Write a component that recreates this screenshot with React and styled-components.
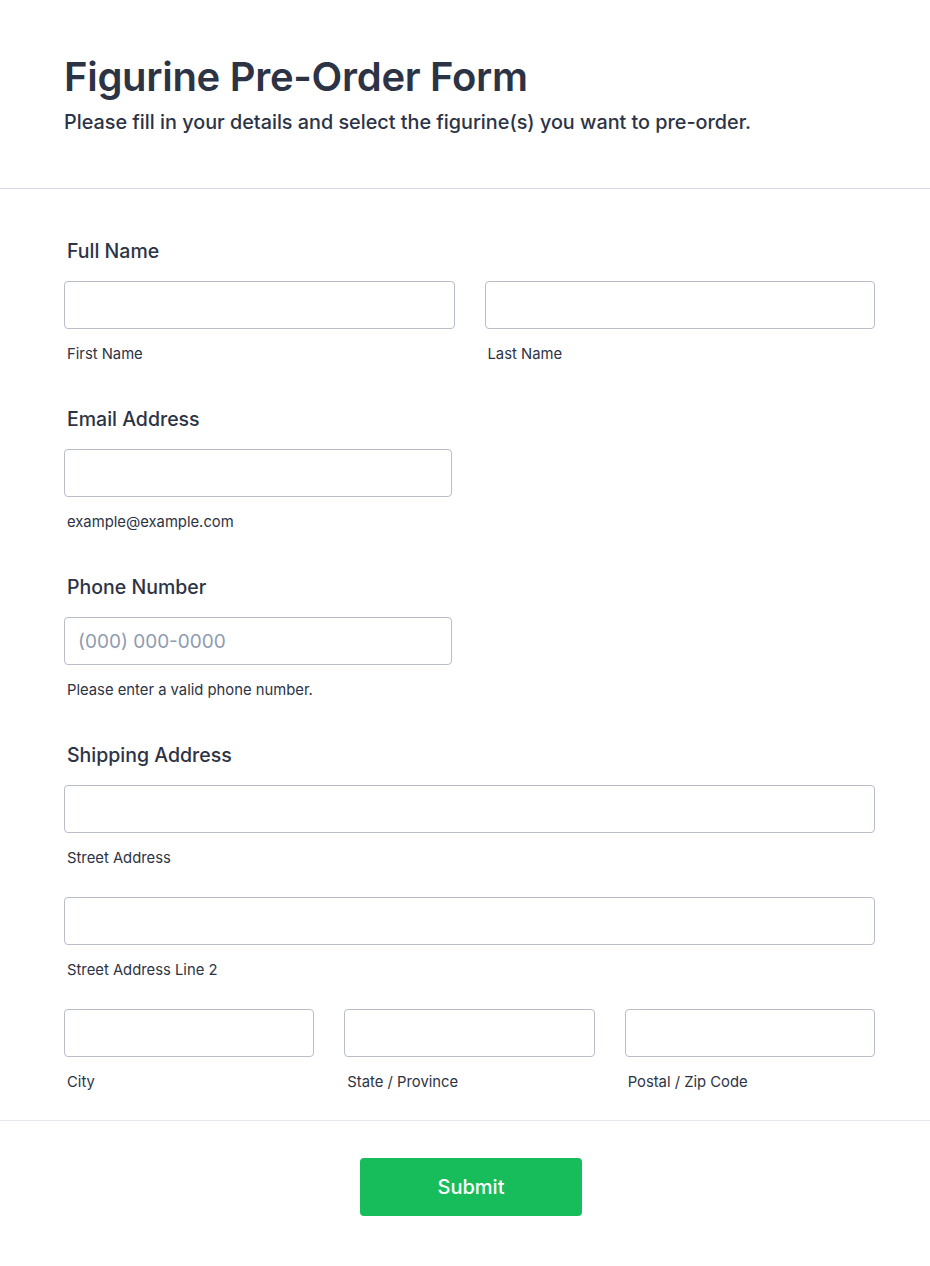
import React from 'react';
import styled, { createGlobalStyle } from 'styled-components';

const GlobalStyle = createGlobalStyle`
  * { box-sizing: border-box; }
  body {
    margin: 0;
    background: #ffffff;
    font-family: Inter, "Noto Sans", sans-serif;
    color: #2c3345;
  }
`;

const Page = styled.div`
  width: 930px;
  background: #fff;
`;

const Header = styled.header`
  padding: 53px 64px 52px;
  border-bottom: 1px solid #d8dae9;
`;

const Title = styled.h1`
  margin: 0;
  font-size: 40px;
  line-height: 48px;
  font-weight: 600;
  letter-spacing: -0.3px;
  color: #2c3345;
`;

const Subtitle = styled.p`
  margin: 7px 0 0;
  font-size: 19.8px;
  line-height: 28px;
  font-weight: 500;
`;

const Body = styled.div`
  padding: 49px 55px 28px 64px;
  display: flex;
  flex-direction: column;
  gap: 42px;
  border-bottom: 1px solid #e6e7ef;
`;

const Field = styled.div`
  display: flex;
  flex-direction: column;
`;

const Label = styled.label`
  padding-left: 3px;
  font-size: 19.5px;
  line-height: 26px;
  font-weight: 500;
  margin-bottom: 17px;
`;

const Row = styled.div`
  display: grid;
  grid-template-columns: ${(p) => p.cols || '1fr'};
  column-gap: 30px;
  row-gap: 29px;
`;

const Cell = styled.div`
  display: flex;
  flex-direction: column;
`;

const Input = styled.input`
  height: 48px;
  width: 100%;
  border: 1px solid #b8bdc9;
  border-radius: 4px;
  padding: 0 13px;
  font-family: inherit;
  font-size: 19px;
  color: #2c3345;
  background: #fff;
  outline: none;
  &::placeholder {
    color: #8f9bb0;
  }
`;

const SubLabel = styled.span`
  padding-left: 3px;
  margin-top: 15px;
  font-size: 14.8px;
  line-height: 20px;
  color: #2c3345;
`;

const Footer = styled.div`
  display: flex;
  justify-content: center;
  padding: 37px 0 50px 12px;
`;

const SubmitButton = styled.button`
  width: 222px;
  height: 58px;
  border: none;
  border-radius: 4px;
  background: #18bd5b;
  color: #fff;
  font-family: inherit;
  font-size: 20px;
  font-weight: 500;
  cursor: pointer;
`;

const App = () => {
  return (
    <Page>
      <GlobalStyle />
      <Header>
        <Title>Figurine Pre-Order Form</Title>
        <Subtitle>Please fill in your details and select the figurine(s) you want to pre-order.</Subtitle>
      </Header>
      <Body>
        <Field>
          <Label>Full Name</Label>
          <Row cols="1fr 1fr">
            <Cell>
              <Input />
              <SubLabel>First Name</SubLabel>
            </Cell>
            <Cell>
              <Input />
              <SubLabel>Last Name</SubLabel>
            </Cell>
          </Row>
        </Field>
        <Field>
          <Label>Email Address</Label>
          <Row cols="388px">
            <Cell>
              <Input />
              <SubLabel>example@example.com</SubLabel>
            </Cell>
          </Row>
        </Field>
        <Field>
          <Label>Phone Number</Label>
          <Row cols="388px">
            <Cell>
              <Input placeholder="(000) 000-0000" />
              <SubLabel>Please enter a valid phone number.</SubLabel>
            </Cell>
          </Row>
        </Field>
        <Field>
          <Label>Shipping Address</Label>
          <Row>
            <Cell>
              <Input />
              <SubLabel>Street Address</SubLabel>
            </Cell>
            <Cell>
              <Input />
              <SubLabel>Street Address Line 2</SubLabel>
            </Cell>
            <Row cols="1fr 1fr 1fr">
              <Cell>
                <Input />
                <SubLabel>City</SubLabel>
              </Cell>
              <Cell>
                <Input />
                <SubLabel>State / Province</SubLabel>
              </Cell>
              <Cell>
                <Input />
                <SubLabel>Postal / Zip Code</SubLabel>
              </Cell>
            </Row>
          </Row>
        </Field>
      </Body>
      <Footer>
        <SubmitButton>Submit</SubmitButton>
      </Footer>
    </Page>
  );
};

export default App;
